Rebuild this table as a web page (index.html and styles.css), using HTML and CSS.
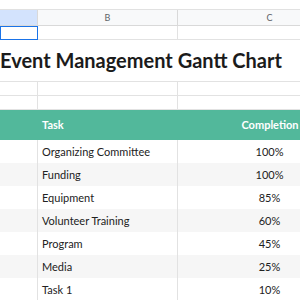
FILE: index.html
```
<!DOCTYPE html>
<html>
<head>
<meta charset="utf-8">
<link rel="stylesheet" href="styles.css">
</head>
<body>
<div class="viewport">
<div class="sheet">
  <div class="topbar"></div>
  <div class="row colhead">
    <div class="cell a sel-col"></div>
    <div class="cell b">B</div>
    <div class="cell c">C</div>
  </div>
  <div class="row r1">
    <div class="cell a selcell"></div>
    <div class="cell b"></div>
    <div class="cell c"></div>
  </div>
  <div class="row title-row">
    <div class="title">Event Management Gantt Chart</div>
  </div>
  <div class="row r1">
    <div class="cell a"></div>
    <div class="cell b"></div>
    <div class="cell c"></div>
  </div>
  <div class="row r1">
    <div class="cell a"></div>
    <div class="cell b"></div>
    <div class="cell c"></div>
  </div>
  <div class="row thead">
    <div class="cell a"></div>
    <div class="cell b">Task</div>
    <div class="cell c">Completion</div>
  </div>
  <div class="row data">
    <div class="cell a"></div><div class="cell b">Organizing Committee</div><div class="cell c">100%</div>
  </div>
  <div class="row data alt">
    <div class="cell a"></div><div class="cell b">Funding</div><div class="cell c">100%</div>
  </div>
  <div class="row data">
    <div class="cell a"></div><div class="cell b">Equipment</div><div class="cell c">85%</div>
  </div>
  <div class="row data alt">
    <div class="cell a"></div><div class="cell b">Volunteer Training</div><div class="cell c">60%</div>
  </div>
  <div class="row data">
    <div class="cell a"></div><div class="cell b">Program</div><div class="cell c">45%</div>
  </div>
  <div class="row data alt">
    <div class="cell a"></div><div class="cell b">Media</div><div class="cell c">25%</div>
  </div>
  <div class="row data">
    <div class="cell a"></div><div class="cell b">Task 1</div><div class="cell c">10%</div>
  </div>
</div>
</div>
</body>
</html>
```
FILE: styles.css
```
html, body {
  margin: 0;
  padding: 0;
  background: #ffffff;
}
.viewport {
  width: 300px;
  height: 300px;
  overflow: hidden;
}
.sheet {
  width: 362px;
  font-family: Lato, "Liberation Sans", sans-serif;
}
.topbar {
  height: 9px;
  background: #ffffff;
  border-bottom: 1px solid #e1e1e1;
}
.row {
  display: grid;
  grid-template-columns: 38px 140px 184px;
}
.cell {
  border-right: 1px solid #e2e2e2;
  border-bottom: 1px solid #e2e2e2;
  box-sizing: border-box;
}
.colhead {
  height: 16px;
  background: #f8f9fa;
}
.colhead .cell {
  font-size: 9px;
  color: #5f6368;
  text-align: center;
  line-height: 15px;
  border-color: #d9d9d9;
}
.colhead .sel-col {
  background: #d3e3fd;
}
.r1 {
  height: 14px;
}
.r1 .selcell {
  border: 1px solid #1a73e8;
  border-top-width: 1px;
}
.title-row {
  display: block;
  height: 42px;
  border-bottom: 1px solid #e2e2e2;
  box-sizing: border-box;
}
.title {
  font-size: 20px;
  font-weight: 700;
  color: #1b1b1b;
  line-height: 40px;
  white-space: nowrap;
}
.thead {
  height: 30px;
  background: #52b89b;
}
.thead .cell {
  border: none;
  color: #ffffff;
  font-weight: 700;
  font-size: 11px;
  line-height: 30px;
}
.thead .b {
  padding-left: 4px;
}
.thead .c {
  text-align: center;
}
.data {
  height: 23px;
}
.data.alt {
  background: #f6f6f6;
}
.data .cell {
  border-bottom: none;
  font-size: 11px;
  color: #222222;
  line-height: 23px;
}
.data .b {
  padding-left: 4px;
  white-space: nowrap;
}
.data .c {
  text-align: center;
}
```
